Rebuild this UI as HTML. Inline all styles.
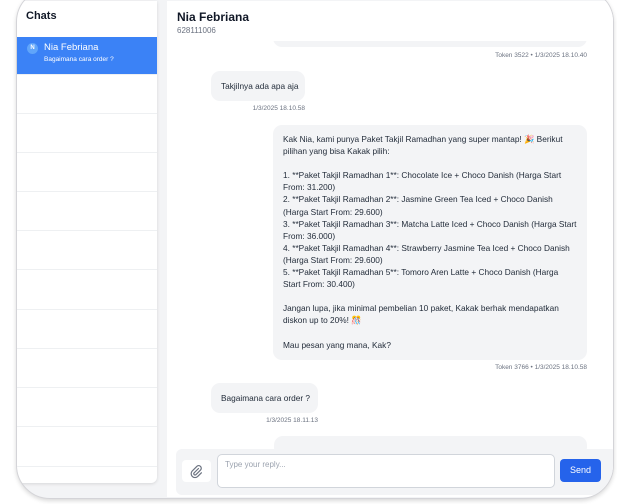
<!DOCTYPE html>
<html><head><meta charset="utf-8"><style>
*{box-sizing:border-box;margin:0;padding:0}
body{width:617px;height:504px;background:#fff;font-family:"Liberation Sans",sans-serif;position:relative;overflow:hidden;color:#111827}
.frame{position:absolute;left:16px;top:-12px;width:598px;height:511px;border:1px solid #d4d4d8;border-radius:34px;background:#f3f4f6;overflow:hidden;box-shadow:0 2px 4px rgba(0,0,0,.15)}
.side{position:absolute;left:0;top:12px;width:140px;height:482px;background:#fff;border-radius:0 0 6px 6px;box-shadow:0 1px 3px rgba(0,0,0,.12);overflow:hidden}
.row{position:absolute;left:0;width:140px;height:39px;border-bottom:1px solid #eef0f2}
.sel{background:#3b82f6;color:#fff}
.main{position:absolute;left:150px;top:12px;width:450px;height:496px;background:#fff;overflow:hidden}
.b{position:absolute;background:#f3f4f6;border-radius:9px;font-size:8.3px;line-height:12.1px;color:#1f2937}
.ts{position:absolute;font-size:6.5px;color:#6b7280;text-align:right}
</style></head><body>
<div class="frame">
 <div class="side">
  <div style="position:absolute;left:9px;top:9px;font-size:11px;font-weight:bold">Chats</div>
  <div class="row sel" style="height:38px;top:36px">
   <div style="position:absolute;left:10px;top:6px;width:11px;height:11px;border-radius:50%;background:#60a5fa;font-size:6px;font-weight:bold;text-align:center;line-height:11px">N</div>
   <div style="position:absolute;left:27px;top:5px;font-size:9.5px">Nia Febriana</div>
   <div style="position:absolute;left:27px;top:19px;font-size:6.5px">Bagaimana cara order ?</div>
  </div>
  <div class="row" style="top:74px"></div>
  <div class="row" style="top:113px"></div>
  <div class="row" style="top:152px"></div>
  <div class="row" style="top:191px"></div>
  <div class="row" style="top:230px"></div>
  <div class="row" style="top:270px"></div>
  <div class="row" style="top:309px"></div>
  <div class="row" style="top:348px"></div>
  <div class="row" style="top:387px"></div>
  <div class="row" style="top:427px"></div>
 </div>
 <div class="main">
  <div class="b" style="left:106px;top:37px;width:314px;height:9px;border-radius:0 0 9px 9px"></div>
  <div style="position:absolute;left:0;top:0;width:450px;height:40px;background:#fff"></div>
  <div style="position:absolute;left:10px;top:9px;font-size:12px;font-weight:bold">Nia Febriana</div>
  <div style="position:absolute;left:10px;top:25px;font-size:8px;color:#6b7280">628111006</div>
  <div class="ts" style="left:200px;top:51px;width:220px">Token 3522 • 1/3/2025 18.10.40</div>
  <div class="b" style="left:44px;top:70px;width:94px;height:30px;padding:9px 10px;white-space:nowrap">Takjilnya ada apa aja</div>
  <div class="ts" style="left:38px;top:104px;width:100px">1/3/2025 18.10.58</div>
  <div class="b" style="left:106px;top:124px;width:314px;height:235px;padding:8px 10px">Kak Nia, kami punya Paket Takjil Ramadhan yang super mantap! 🎉 Berikut pilihan yang bisa Kakak pilih:<br><br>1. **Paket Takjil Ramadhan 1**: Chocolate Ice + Choco Danish (Harga Start From: 31.200)<br>2. **Paket Takjil Ramadhan 2**: Jasmine Green Tea Iced + Choco Danish (Harga Start From: 29.600)<br>3. **Paket Takjil Ramadhan 3**: Matcha Latte Iced + Choco Danish (Harga Start From: 36.000)<br>4. **Paket Takjil Ramadhan 4**: Strawberry Jasmine Tea Iced + Choco Danish (Harga Start From: 29.600)<br>5. **Paket Takjil Ramadhan 5**: Tomoro Aren Latte + Choco Danish (Harga Start From: 30.400)<br><br>Jangan lupa, jika minimal pembelian 10 paket, Kakak berhak mendapatkan diskon up to 20%! 🎊<br><br>Mau pesan yang mana, Kak?</div>
  <div class="ts" style="left:200px;top:363px;width:220px">Token 3766 • 1/3/2025 18.10.58</div>
  <div class="b" style="left:44px;top:382px;width:107px;height:30px;padding:9px 10px;white-space:nowrap">Bagaimana cara order ?</div>
  <div class="ts" style="left:51px;top:416px;width:100px">1/3/2025 18.11.13</div>
  <div class="b" style="left:107px;top:435px;width:313px;height:20px"></div>
  <div style="position:absolute;left:9px;top:448px;width:441px;height:46px;background:#f3f4f6;border-radius:6px">
   <div style="position:absolute;left:6px;top:11px;width:29px;height:22px;background:#fff;border-radius:4px">
    <svg width="29" height="22" viewBox="0 0 29 22"><path d="M16.5 8.5l-4.5 4.5a1.3 1.3 0 0 0 1.8 1.8l4.7-4.7a2.6 2.6 0 0 0-3.7-3.7l-4.7 4.7a3.9 3.9 0 0 0 5.5 5.5l3.8-3.8" fill="none" stroke="#6b7280" stroke-width="1.2" stroke-linecap="round"/></svg>
   </div>
   <div style="position:absolute;left:41px;top:5px;width:338px;height:34px;background:#fff;border:1px solid #d1d5db;border-radius:5px;font-size:8px;color:#9ca3af;padding:5px 7px">Type your reply...</div>
   <div style="position:absolute;left:384px;top:10px;width:41px;height:23px;background:#2563eb;border-radius:4px;color:#fff;font-size:9px;text-align:center;line-height:23px">Send</div>
  </div>
 </div>
</div>
</body></html>
